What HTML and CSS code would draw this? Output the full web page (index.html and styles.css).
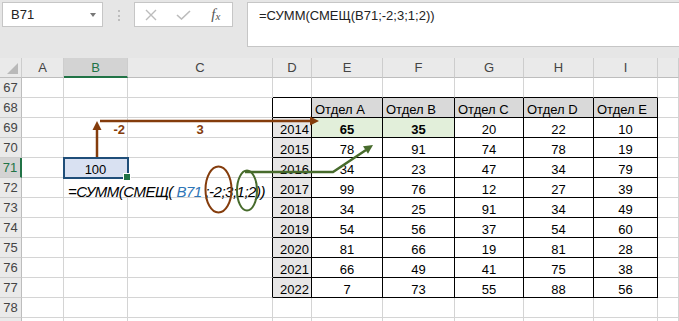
FILE: index.html
```html
<!DOCTYPE html>
<html lang="ru">
   <head>
      <meta charset="UTF-8">
      <meta name="viewport" content="width=device-width, initial-scale=1.0">
      <title>СМЕЩ</title>
      <link rel="stylesheet" href="styles.css">
   </head>
   <body>
      <div class="toolbar">
         <div class="namebox"><span>B71</span><span class="caret"></span></div>
         <div class="grip"></div>
         <div class="fxbox">
            <span class="ico">
               <svg width="12" height="12" viewBox="0 0 12 12"><path d="M1 1L11 11M11 1L1 11" stroke="#bcbcbc" stroke-width="1.4" fill="none"/></svg>
            </span>
            <span class="ico">
               <svg width="15" height="10" viewBox="0 0 15 10"><path d="M1 5L5.5 9L14 1" stroke="#bcbcbc" stroke-width="1.6" fill="none"/></svg>
            </span>
            <span class="ico fx"><i>f</i><i class="sub">x</i></span>
         </div>
         <div class="formula">=СУММ(СМЕЩ(B71;-2;3;1;2))</div>
      </div>

      <div class="sheet">
         <div class="ch corner"></div><div class="ch">A</div><div class="ch sel">B</div><div class="ch">C</div><div class="ch">D</div><div class="ch">E</div><div class="ch">F</div><div class="ch">G</div><div class="ch">H</div><div class="ch">I</div><div class="ch"></div>

         <div class="rh">67</div><div class="c"></div><div class="c"></div><div class="c"></div><div class="c edge-b"></div><div class="c edge-b"></div><div class="c edge-b"></div><div class="c edge-b"></div><div class="c edge-b"></div><div class="c edge-b"></div><div class="c"></div>

         <div class="rh">68</div><div class="c"></div><div class="c"></div><div class="c edge-r"></div><div class="c t"></div><div class="c t hd">Отдел A</div><div class="c t hd">Отдел B</div><div class="c t hd">Отдел C</div><div class="c t hd">Отдел D</div><div class="c t hd">Отдел E</div><div class="c"></div>

         <div class="rh">69</div><div class="c"></div><div class="c lbl right">-2</div><div class="c lbl num edge-r">3</div><div class="c t yr">2014</div><div class="c t num hl">65</div><div class="c t num hl">35</div><div class="c t num">20</div><div class="c t num">22</div><div class="c t num">10</div><div class="c"></div>

         <div class="rh">70</div><div class="c"></div><div class="c"></div><div class="c edge-r"></div><div class="c t yr">2015</div><div class="c t num">78</div><div class="c t num">91</div><div class="c t num">74</div><div class="c t num">78</div><div class="c t num">19</div><div class="c"></div>

         <div class="rh sel">71</div><div class="c"></div><div class="c num active">100</div><div class="c edge-r"></div><div class="c t yr">2016</div><div class="c t num">34</div><div class="c t num">23</div><div class="c t num">47</div><div class="c t num">34</div><div class="c t num">79</div><div class="c"></div>

         <div class="rh">72</div><div class="c"></div><div class="c edge-r expr"><span>=СУММ(СМЕЩ( <span class="ref">B71</span> ;-2;3;1;2))</span></div><div class="c t yr">2017</div><div class="c t num">99</div><div class="c t num">76</div><div class="c t num">12</div><div class="c t num">27</div><div class="c t num">39</div><div class="c"></div>

         <div class="rh">73</div><div class="c"></div><div class="c"></div><div class="c edge-r"></div><div class="c t yr">2018</div><div class="c t num">34</div><div class="c t num">25</div><div class="c t num">91</div><div class="c t num">34</div><div class="c t num">49</div><div class="c"></div>

         <div class="rh">74</div><div class="c"></div><div class="c"></div><div class="c edge-r"></div><div class="c t yr">2019</div><div class="c t num">54</div><div class="c t num">56</div><div class="c t num">37</div><div class="c t num">54</div><div class="c t num">60</div><div class="c"></div>

         <div class="rh">75</div><div class="c"></div><div class="c"></div><div class="c edge-r"></div><div class="c t yr">2020</div><div class="c t num">81</div><div class="c t num">66</div><div class="c t num">19</div><div class="c t num">81</div><div class="c t num">28</div><div class="c"></div>

         <div class="rh">76</div><div class="c"></div><div class="c"></div><div class="c edge-r"></div><div class="c t yr">2021</div><div class="c t num">66</div><div class="c t num">49</div><div class="c t num">41</div><div class="c t num">75</div><div class="c t num">38</div><div class="c"></div>

         <div class="rh">77</div><div class="c"></div><div class="c"></div><div class="c edge-r"></div><div class="c t yr">2022</div><div class="c t num">7</div><div class="c t num">73</div><div class="c t num">55</div><div class="c t num">88</div><div class="c t num">56</div><div class="c"></div>

         <div class="rh">78</div><div class="c"></div><div class="c"></div><div class="c"></div><div class="c"></div><div class="c"></div><div class="c"></div><div class="c"></div><div class="c"></div><div class="c"></div><div class="c"></div>

         <div class="rh"></div><div class="c"></div><div class="c"></div><div class="c"></div><div class="c"></div><div class="c"></div><div class="c"></div><div class="c"></div><div class="c"></div><div class="c"></div><div class="c"></div>
      </div>

      <!-- arrows and circles drawn over the sheet -->
      <svg class="marks" width="679" height="321" viewBox="0 0 679 321">
         <g stroke="#843c0c" fill="#843c0c">
            <line x1="97" y1="157" x2="97" y2="129" stroke-width="2.5"/>
            <polygon points="97,121 92.5,130 101.5,130" stroke="none"/>
            <line x1="100" y1="121" x2="311" y2="121" stroke-width="2.5"/>
            <polygon points="319,121 310,116.5 310,125.5" stroke="none"/>
            <ellipse cx="218.5" cy="189.5" rx="13" ry="23" fill="none" stroke-width="2"/>
         </g>
         <g stroke="#476b2c" fill="#476b2c">
            <polyline points="245,172 333,172 366,150" fill="none" stroke-width="2.5"/>
            <polygon points="373,145 368,153.7 363,146.3" stroke="none"/>
            <ellipse cx="247" cy="190.5" rx="10" ry="20" fill="none" stroke-width="2"/>
         </g>
      </svg>
   </body>
</html>
```

FILE: styles.css
```css
* {
   box-sizing: border-box;
}
body {
   margin: 0;
   width: 679px;
   height: 321px;
   overflow: hidden;
   position: relative;
   background: #e6e6e6;
   font-family: "Liberation Sans", Arial, sans-serif;
   font-size: 13px;
   color: #000;
}

/* formula bar */
.toolbar {
   display: flex;
   align-items: flex-start;
   height: 58px;
   padding: 2px 0 0 2px;
}
.namebox {
   width: 101px;
   height: 25px;
   background: #fff;
   border: 1px solid #c6c6c6;
   display: flex;
   align-items: center;
   justify-content: space-between;
   padding: 0 6px 0 8px;
   color: #222;
}
.caret {
   border-left: 3px solid transparent;
   border-right: 3px solid transparent;
   border-top: 4px solid #777;
}
.grip {
   width: 2px;
   height: 11px;
   margin: 8px 14px 0 15px;
   border-left: 2px dotted #bdbdbd;
}
.fxbox {
   width: 99px;
   height: 25px;
   background: #fff;
   border: 1px solid #c6c6c6;
   display: flex;
   align-items: center;
}
.ico {
   width: 36px;
   display: flex;
   justify-content: center;
   align-items: center;
}
.fx {
   font-family: "Liberation Serif", serif;
   font-size: 15px;
   color: #555;
   line-height: 1;
}
.fx .sub {
   font-size: 11px;
   position: relative;
   top: 2px;
}
.formula {
   flex: 1;
   height: 45px;
   margin-left: 14px;
   margin-right: -2px;
   background: #fff;
   border: 1px solid #c6c6c6;
   padding: 5px 0 0 11px;
   line-height: 16px;
   color: #222;
}

/* sheet grid */
.sheet {
   display: grid;
   grid-template-columns: 22px 42px 64px 145px 39px 71px 72px 69px 70px 64px 21px;
   grid-auto-rows: 20px;
   height: 263px;
   overflow: hidden;
   background: #fff;
}
.ch {
   background: #eaeaea;
   border-right: 1px solid #cdcdcd;
   border-bottom: 1px solid #bdbdbd;
   display: flex;
   align-items: center;
   justify-content: center;
   color: #444;
}
.ch.sel {
   background: #d3d3d3;
   border-bottom: 2px solid #217346;
   color: #217346;
}
.corner {
   position: relative;
}
.corner::after {
   content: "";
   position: absolute;
   right: 3px;
   bottom: 3px;
   border-left: 11px solid transparent;
   border-bottom: 11px solid #b9b9b9;
}
.rh {
   background: #eaeaea;
   border-right: 1px solid #bdbdbd;
   border-bottom: 1px solid #cdcdcd;
   display: flex;
   align-items: center;
   justify-content: center;
   color: #444;
}
.rh.sel {
   background: #d3d3d3;
   border-right: 2px solid #217346;
   color: #217346;
}
.c {
   border-right: 1px solid #d4d4d4;
   border-bottom: 1px solid #d4d4d4;
   display: flex;
   align-items: flex-end;
   padding: 0 3px;
   line-height: 14px;
   white-space: nowrap;
}
.edge-r {
   border-right-color: #000;
}
.edge-b {
   border-bottom-color: #000;
}
.t {
   border-right-color: #000;
   border-bottom-color: #000;
}
.num {
   justify-content: center;
}
.right {
   justify-content: flex-end;
   padding-right: 2px;
}
.yr {
   background: #e7e6e6;
   justify-content: flex-end;
   padding-right: 2px;
}
.hd {
   background: #d9d9d9;
}
.hl {
   background: #e2efda;
   font-weight: bold;
}
.lbl {
   color: #843c0c;
   font-weight: bold;
}
.active {
   position: relative;
   background: #d9e1f2;
   outline: 2px solid #1f4e79;
   outline-offset: -1px;
}
.active::after {
   content: "";
   position: absolute;
   right: -4px;
   bottom: -4px;
   width: 6px;
   height: 6px;
   background: #217346;
   border: 1px solid #fff;
}
.expr {
   grid-column: span 2;
   padding-left: 4px;
   font-size: 15px;
   font-style: italic;
   letter-spacing: -0.5px;
   line-height: 10px;
}
.ref {
   color: #2e75b6;
}

.marks {
   position: absolute;
   left: 0;
   top: 0;
   pointer-events: none;
}
```
